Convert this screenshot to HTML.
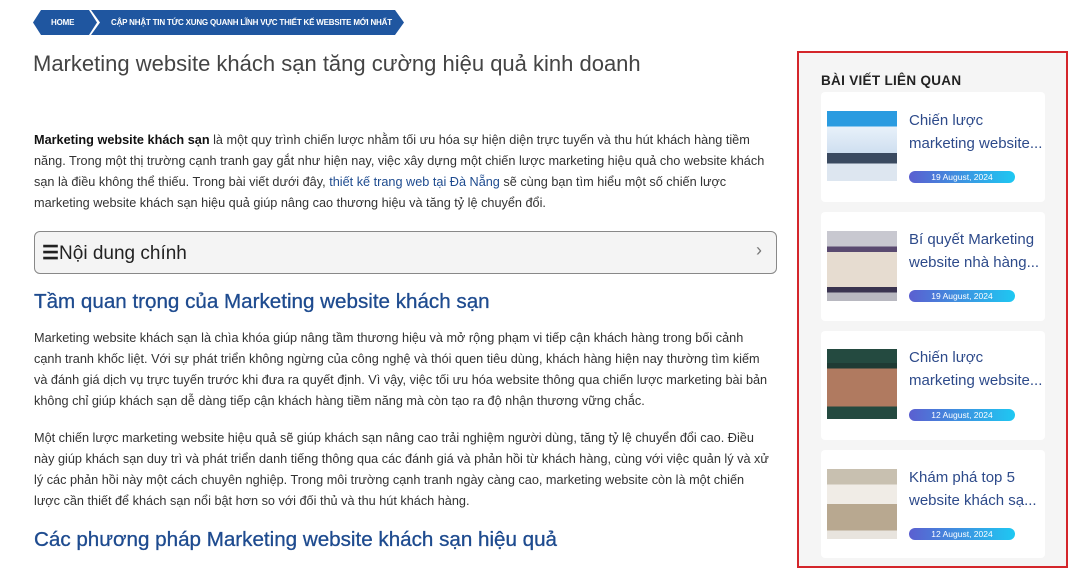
<!DOCTYPE html>
<html><head><meta charset="utf-8"><style>
*{margin:0;padding:0;box-sizing:border-box}
body{width:1080px;height:569px;background:#fff;position:relative;overflow:hidden;font-family:"Liberation Sans",Arial,sans-serif;color:#333}
.a{position:absolute}
.bc{background:#1f56a0;color:#fff;font-size:8px;font-weight:bold;height:25px;line-height:25px;top:10px;letter-spacing:-0.2px}
.p{left:34px;font-size:12.7px;line-height:21px;white-space:nowrap;color:#333}
.p b{color:#111}
.lk{color:#1e4b8f}
h2{position:absolute;left:34px;font-size:20.6px;font-weight:normal;color:#1e4b8f;white-space:nowrap;-webkit-text-stroke:0.3px #1e4b8f}
.card{position:absolute;left:821px;width:224px;background:#fff;border-radius:4px}
.img{position:absolute;left:6px;width:70px;height:70px}
.t{position:absolute;left:88px;font-size:15px;line-height:23px;color:#2d4a8a;white-space:nowrap}
.d{position:absolute;left:88px;width:106px;height:12px;border-radius:6px;background:linear-gradient(90deg,#5b5fd0,#1ec8f2);color:#fff;font-size:8.5px;text-align:center;line-height:12px}
</style></head><body>
<div class="a bc" style="left:33px;width:64px;clip-path:polygon(8px 0,56px 0,64px 50%,56px 100%,8px 100%,0 50%);padding-left:18px">HOME</div>
<div class="a bc" style="left:91px;width:313px;clip-path:polygon(0 0,304px 0,313px 50%,304px 100%,0 100%,9px 50%);padding-left:20px">CẬP NHẬT TIN TỨC XUNG QUANH LĨNH VỰC THIẾT KẾ WEBSITE MỚI NHẤT</div>
<div class="a" style="left:33px;top:51px;font-size:22px;color:#444;white-space:nowrap">Marketing website khách sạn tăng cường hiệu quả kinh doanh</div>

<div class="a p" style="top:130px"><b>Marketing website khách sạn</b> là một quy trình chiến lược nhằm tối ưu hóa sự hiện diện trực tuyến và thu hút khách hàng tiềm<br>năng. Trong một thị trường cạnh tranh gay gắt như hiện nay, việc xây dựng một chiến lược marketing hiệu quả cho website khách<br>sạn là điều không thể thiếu. Trong bài viết dưới đây, <span class="lk">thiết kế trang web tại Đà Nẵng</span> sẽ cùng bạn tìm hiểu một số chiến lược<br>marketing website khách sạn hiệu quả giúp nâng cao thương hiệu và tăng tỷ lệ chuyển đổi.</div>

<div class="a" style="left:34px;top:231px;width:743px;height:43px;border:1px solid #888;border-radius:6px;background:#f4f4f4">
<div class="a" style="left:7px;top:10px;font-size:19px;color:#222;white-space:nowrap"><b>☰</b>Nội dung chính</div>
<div class="a" style="right:14px;top:8px;font-size:18px;color:#777">›</div>
</div>

<h2 style="top:290px">Tầm quan trọng của Marketing website khách sạn</h2>
<div class="a p" style="top:328px">Marketing website khách sạn là chìa khóa giúp nâng tầm thương hiệu và mở rộng phạm vi tiếp cận khách hàng trong bối cảnh<br>cạnh tranh khốc liệt. Với sự phát triển không ngừng của công nghệ và thói quen tiêu dùng, khách hàng hiện nay thường tìm kiếm<br>và đánh giá dịch vụ trực tuyến trước khi đưa ra quyết định. Vì vậy, việc tối ưu hóa website thông qua chiến lược marketing bài bản<br>không chỉ giúp khách sạn dễ dàng tiếp cận khách hàng tiềm năng mà còn tạo ra độ nhận thương vững chắc.</div>
<div class="a p" style="top:428px">Một chiến lược marketing website hiệu quả sẽ giúp khách sạn nâng cao trải nghiệm người dùng, tăng tỷ lệ chuyển đổi cao. Điều<br>này giúp khách sạn duy trì và phát triển danh tiếng thông qua các đánh giá và phản hồi từ khách hàng, cùng với việc quản lý và xử<br>lý các phản hồi này một cách chuyên nghiệp. Trong môi trường cạnh tranh ngày càng cao, marketing website còn là một chiến<br>lược cần thiết để khách sạn nổi bật hơn so với đối thủ và thu hút khách hàng.</div>
<h2 style="top:528px">Các phương pháp Marketing website khách sạn hiệu quả</h2>

<div class="a" style="left:797px;top:51px;width:271px;height:517px;border:2px solid #d4262b;background:#f5f5f5"></div>
<div class="a" style="left:821px;top:73px;font-size:13.5px;font-weight:bold;color:#222;letter-spacing:0.3px">BÀI VIẾT LIÊN QUAN</div>

<div class="card" style="top:92px;height:110px">
<div class="img" style="top:19px;background:linear-gradient(180deg,#2a9be0 0 22%,#e8f1fa 22%,#cfdff0 60%,#3a4a60 60% 75%,#dde6f0 75%)"></div>
<div class="t" style="top:17px">Chiến lược<br>marketing website...</div>
<div class="d" style="top:79px">19 August, 2024</div></div>

<div class="card" style="top:212px;height:109px">
<div class="img" style="top:19px;background:linear-gradient(180deg,#c8c8d0 0 22%,#5a4a70 22% 30%,#e6dcd0 30% 80%,#3a3450 80% 88%,#b8b8c0 88%)"></div>
<div class="t" style="top:16px">Bí quyết Marketing<br>website nhà hàng...</div>
<div class="d" style="top:78px">19 August, 2024</div></div>

<div class="card" style="top:331px;height:109px">
<div class="img" style="top:18px;background:linear-gradient(180deg,#244a40 0 20%,#1f3b34 20% 28%,#b07a60 28% 82%,#244a40 82%)"></div>
<div class="t" style="top:15px">Chiến lược<br>marketing website...</div>
<div class="d" style="top:78px">12 August, 2024</div></div>

<div class="card" style="top:450px;height:108px">
<div class="img" style="top:19px;background:linear-gradient(180deg,#c8c0b0 0 22%,#f0ece6 22% 50%,#b8a890 50% 88%,#e8e4de 88%)"></div>
<div class="t" style="top:16px">Khám phá top 5<br>website khách sạ...</div>
<div class="d" style="top:78px">12 August, 2024</div></div>
</body></html>
